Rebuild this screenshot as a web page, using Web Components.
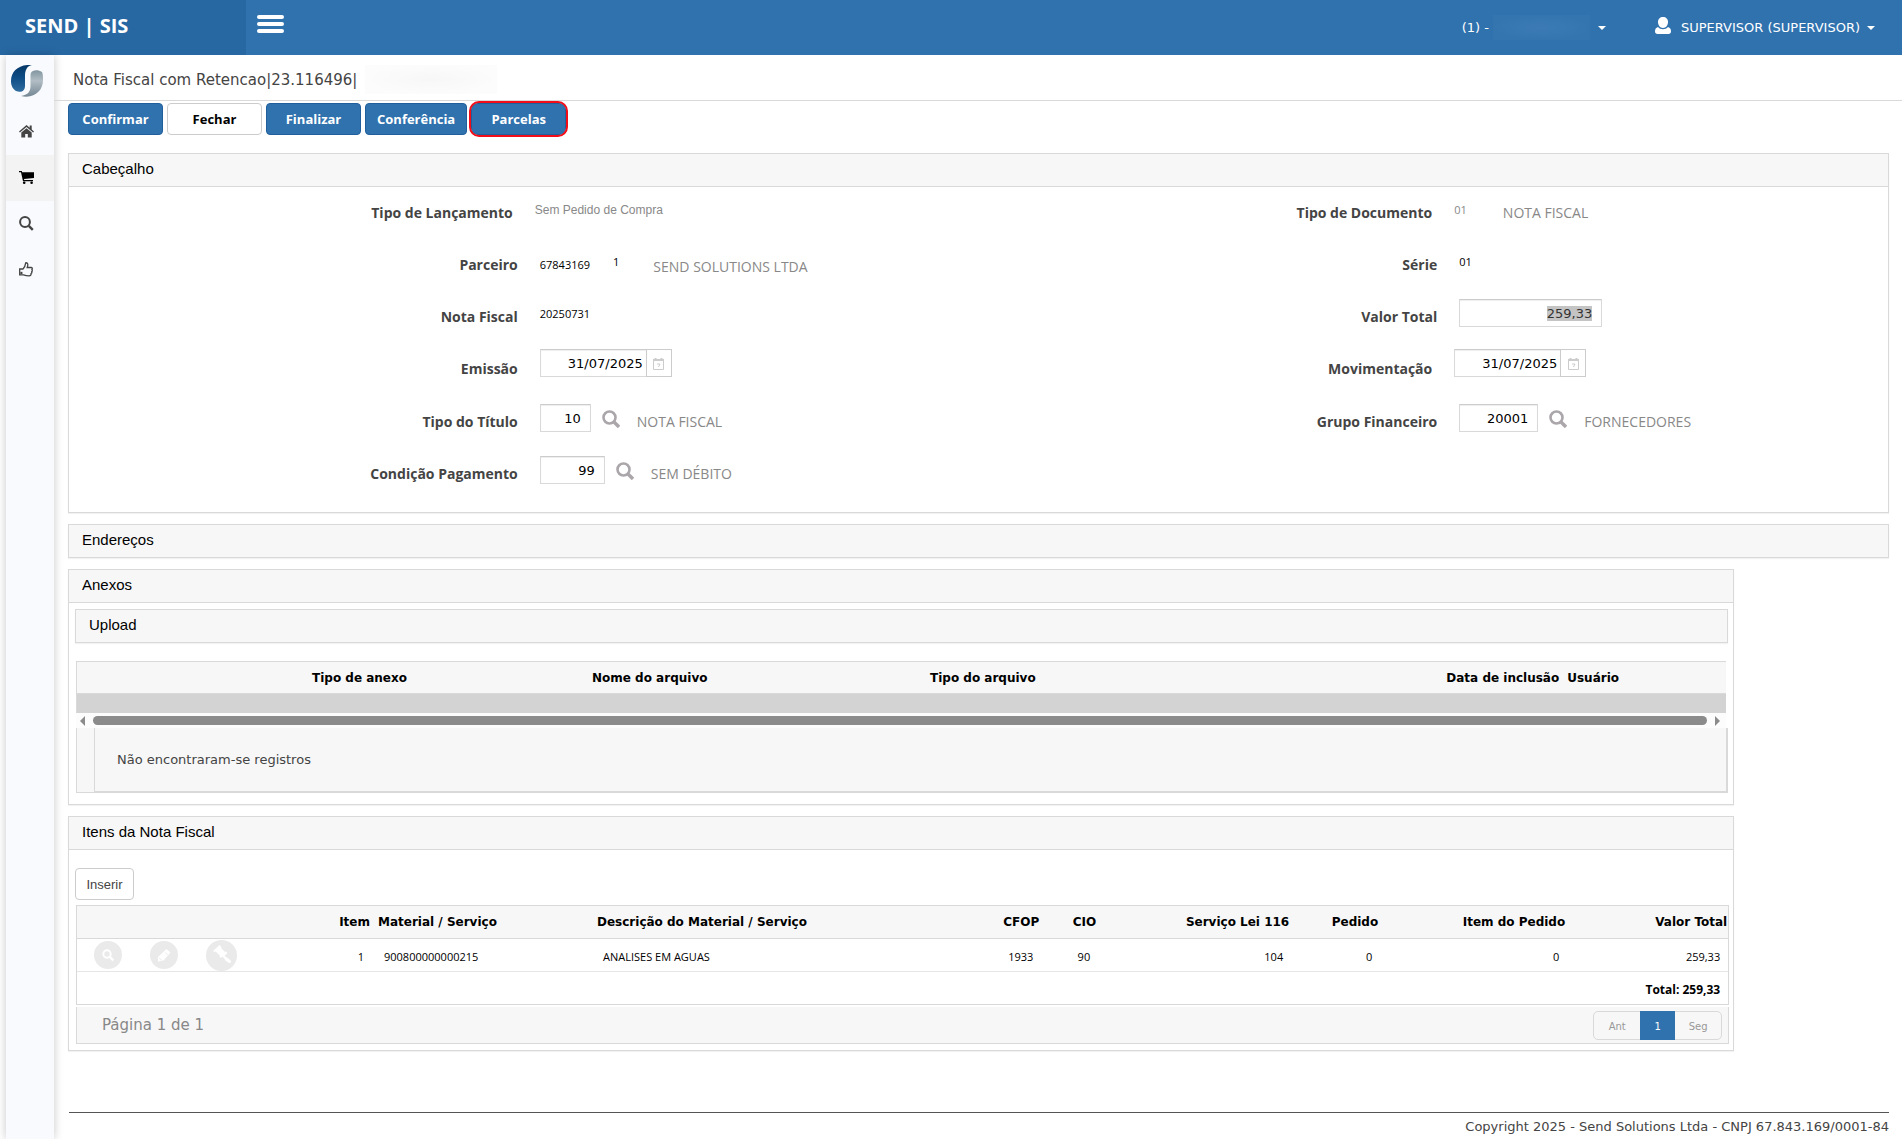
<!DOCTYPE html>
<html lang="pt-BR">
<head>
<meta charset="utf-8">
<title>SEND | SIS - Nota Fiscal</title>
<style>
  html, body { margin: 0; padding: 0; }
  body {
    --blue: #3072ae; --line: #d9d9d9; --soft: #f7f7f7;
    --wide: "DejaVu Sans", sans-serif; --human: "Open Sans", sans-serif; --plain: "Liberation Sans", sans-serif;
    background: #fff; font-family: "DejaVu Sans", sans-serif; font-size: 13px; color: #444;
  }
</style>
</head>
<body>
<sis-app>
  <sis-topbar slot="top" brand="SEND | SIS" company="(1) -" user="SUPERVISOR (SUPERVISOR)"></sis-topbar>
  <sis-sidebar slot="side"></sis-sidebar>
  <sis-title slot="title">Nota Fiscal com Retencao|23.116496|</sis-title>
  <sis-toolbar>
    <sis-button>Confirmar</sis-button>
    <sis-button kind="light">Fechar</sis-button>
    <sis-button>Finalizar</sis-button>
    <sis-button>Conferência</sis-button>
    <sis-button marked>Parcelas</sis-button>
  </sis-toolbar>
  <sis-panel heading="Cabeçalho">
    <sis-form>
      <sis-field tight label="Tipo de Lançamento" kind="choice" value="Sem Pedido de Compra"></sis-field>
      <sis-field tight label="Tipo de Documento" kind="mutedcode" value="01" desc="NOTA FISCAL"></sis-field>
      <sis-field label="Parceiro" kind="partner" value="67843169" branch="1" desc="SEND SOLUTIONS LTDA"></sis-field>
      <sis-field label="Série" kind="raised" value="01"></sis-field>
      <sis-field label="Nota Fiscal" kind="raised" value="20250731"></sis-field>
      <sis-field label="Valor Total" kind="text" value="259,33" width="143" selected></sis-field>
      <sis-field label="Emissão" kind="date" value="31/07/2025" width="107"></sis-field>
      <sis-field tight label="Movimentação" kind="date" value="31/07/2025" width="107"></sis-field>
      <sis-field label="Tipo do Título" kind="lookup" value="10" width="51" desc="NOTA FISCAL"></sis-field>
      <sis-field label="Grupo Financeiro" kind="lookup" value="20001" width="79" desc="FORNECEDORES"></sis-field>
      <sis-field label="Condição Pagamento" kind="lookup" value="99" width="65" desc="SEM DÉBITO"></sis-field>
    </sis-form>
  </sis-panel>
  <sis-panel heading="Endereços" closed></sis-panel>
  <sis-panel heading="Anexos" narrow>
    <sis-attachments>
      <sis-panel heading="Upload" closed></sis-panel>
    </sis-attachments>
  </sis-panel>
  <sis-panel heading="Itens da Nota Fiscal" narrow>
    <sis-items></sis-items>
  </sis-panel>
  <sis-footer slot="foot">Copyright 2025 - Send Solutions Ltda - CNPJ 67.843.169/0001-84</sis-footer>
</sis-app>

<script>
class SisElement extends HTMLElement {
  connectedCallback() {
    if (this.shadowRoot) return;
    this.attachShadow({ mode: "open" }).innerHTML = "<style>:host,*{box-sizing:border-box}" + this.css() + "</style>" + this.html();
    this.ready();
  }
  attr(name) { return this.getAttribute(name) || ""; }
  ready() {}
}

customElements.define("sis-app", class extends SisElement {
  css() { return `
    :host{display:flex;flex-direction:column;min-height:100vh}
    .below{display:flex;flex:1}
    .page{flex:1;min-width:0;display:flex;flex-direction:column}
    main{display:flex;flex-direction:column;gap:11px;padding:2px 13px 20px 14px}
    ::slotted(sis-footer){margin-top:auto}`; }
  html() { return `<slot name="top"></slot><div class="below"><slot name="side"></slot><div class="page"><slot name="title"></slot><main><slot></slot></main><slot name="foot"></slot></div></div>`; }
});

customElements.define("sis-topbar", class extends SisElement {
  css() { return `
    :host{display:flex;height:55px;background:var(--blue);color:#fff;font:13px var(--wide)}
    .brand{width:246px;padding:0 25px;background:#2768a3;font:bold 20px/52px var(--human)}
    .menu{display:flex;flex-direction:column;gap:3px;width:27px;height:18px;margin:15px 0 0 11px;padding:0;border:0;background:none}
    .menu i{height:4px;width:27px;border-radius:2px;background:#fff}
    nav{margin-left:auto;display:flex;align-items:center;padding-right:27px}
    a{display:flex;align-items:center;color:#fff;text-decoration:none;white-space:pre}
    .blank{width:97px;height:25px;margin:0 8px 0 4px;background:radial-gradient(closest-side,#3b7ab5,#3475b0)}
    .caret{border:4px solid transparent;border-top-color:#fff;border-bottom:0;margin-left:7px}
    .blank + .caret{margin-left:0}
    .user{margin-left:49px}
    .user svg{margin:0 10px 4px 0}`; }
  html() { return `<div class="brand">${this.attr("brand")}</div>
    <button class="menu" aria-label="Menu"><i></i><i></i><i></i></button>
    <nav><a href="#">${this.attr("company")}<span class="blank"></span><span class="caret"></span></a>
    <a href="#" class="user"><svg width="16" height="17" viewBox="0 0 16 17" fill="#fff"><path d="M8 0C5 0 3 2 3 5c0 3 2 6 5 6s5-3 5-6c0-3-2-5-5-5z"/><path d="M3 10c-2 .7-3 2-3 4.500C0 16 1 17 2.500 17h11c1.500 0 2.500-1 2.500-2.500C16 12 15 10.700 13 10c-1.300 1.500-3 2.200-5 2.200S4.300 11.500 3 10z"/></svg>${this.attr("user")}<span class="caret"></span></a></nav>`; }
});

customElements.define("sis-sidebar", class extends SisElement {
  css() { return `
    :host{display:block;width:48px;margin-left:6px;background:#f9fafd;box-shadow:0 0 9px rgba(0,0,0,.22)}
    .logo{display:block;height:54px;padding:10px 0 0 5px}
    nav a{display:flex;height:46px;padding:0 8px 2px 0;align-items:center;justify-content:center;color:#444}
    nav a.on{background:#f3f3f3;color:#000}`; }
  html() { return `<a class="logo" href="#" aria-label="Send"><svg width="32" height="32" viewBox="0 0 32 32">
      <defs><linearGradient id="b" x2="0" y2="1"><stop stop-color="#063766"/><stop offset=".45" stop-color="#0c4b84"/><stop offset="1" stop-color="#2f6c9f"/></linearGradient>
      <linearGradient id="g" x2="0" y2="1"><stop stop-color="#8296a0"/><stop offset=".4" stop-color="#b2bdc4"/><stop offset="1" stop-color="#748793"/></linearGradient></defs>
      <path fill="url(#b)" d="M21 0C8-1 0 6 0 16c0 5 2 8 5 10 5 2 9 0 9-5V11c0-6 2-10 7-11z"/>
      <path fill="url(#g)" d="M31 7c-3-2-7-2-9-1-2 .800-2.500 2-2.500 5v10c0 6-3 9-9.500 10 13 3 22-5 22-16 0-3 0-6-1-8z"/></svg></a>
    <nav><a href="#" aria-label="Início"><svg width="15" height="13" viewBox="0 0 15 13" fill="currentColor"><path d="M7.500 0 0 6.500l.9 1L7.500 2l6.600 5.500.9-1-2.300-2V.5h-2v2.200z"/><path d="M7.500 3.200 2.300 7.600V12.500h3.900V9h2.600v3.500h3.900V7.600z"/></svg></a>
    <a href="#" class="on" aria-label="Compras"><svg width="15" height="13" viewBox="0 0 15 13" fill="currentColor"><path d="M0 0h2.800l.4 1.200H15V7L5 8.100l.2 1H14v1.200H4L2 1.200H0z"/><circle cx="5.200" cy="11.700" r="1.300"/><circle cx="12.600" cy="11.700" r="1.300"/></svg></a>
    <a href="#" aria-label="Pesquisar"><svg width="15" height="15" viewBox="0 0 15 15" fill="none" stroke="currentColor" stroke-width="2"><circle cx="6" cy="6" r="4.900"/><path d="m9.800 9.800 4 4" stroke-width="2.400"/></svg></a>
    <a href="#" aria-label="Aprovar"><svg width="14" height="15" viewBox="0 0 14 15" fill="none" stroke="currentColor" stroke-width="1.300"><path d="M.7 7H4c2-2 2.300-3 2.700-6.200 2.200-.3 2.600 1.500 1.500 4.700H12c1.600 0 1.500 1.700.9 2.200.6.700.4 1.600-.2 2 .3.800 0 1.500-.6 1.800.1 1.500-.6 2.300-2 2.300-2.500 0-3.600-.2-5.600-1H.7z"/><path d="M2 10.500h.8v1H2z"/></svg></a></nav>`; }
});

customElements.define("sis-title", class extends SisElement {
  css() { return `
    :host{display:block;border-bottom:1px solid var(--line)}
    h1{display:flex;align-items:center;height:45px;margin:0;padding:4px 0 0 19px;font:15px var(--wide);color:#444}
    span{width:132px;height:29px;margin-left:8px;background:radial-gradient(closest-side,#f7f7f7,#fcfcfc)}`; }
  html() { return `<h1><slot></slot><span></span></h1>`; }
});

customElements.define("sis-toolbar", class extends SisElement {
  css() { return `:host{display:flex;gap:4px;margin-bottom:7px}`; }
  html() { return `<slot></slot>`; }
});

customElements.define("sis-button", class extends SisElement {
  css() { return `
    :host{display:block}
    button{display:block;min-width:95px;height:32px;padding:0 11px;border:1px solid #205f9b;border-radius:4px;background:var(--blue);color:#fff;font:bold 13px var(--human)}
    :host([kind=light]) button{background:#fff;color:#000;border-color:#ccc}
    :host([marked]){outline:2px solid #f20d18;border-radius:8px}
    :host([marked]) button{border-radius:7px}`; }
  html() { return `<button type="button"><slot></slot></button>`; }
});

customElements.define("sis-panel", class extends SisElement {
  css() { return `
    :host{display:block;border:1px solid var(--line);background:#fff;box-shadow:0 1px 1px rgba(0,0,0,.05)}
    :host([narrow]){width:91.5%}
    h2{margin:0;height:32px;padding-left:13px;background:var(--soft);color:#000;font:15px/30px var(--plain)}
    .body{border-top:1px solid var(--line)}
    :host([closed]) .body{display:none}`; }
  html() { return `<h2>${this.attr("heading")}</h2><div class="body"><slot></slot></div>`; }
});

customElements.define("sis-form", class extends SisElement {
  css() { return `:host{display:grid;grid-template-columns:1fr 1fr;column-gap:20px;grid-template-rows:51px 54px 50px 54px 52px 52px;padding-bottom:12px}`; }
  html() { return `<slot></slot>`; }
});

const LENS = `<svg width="18" height="18" viewBox="0 0 18 18" fill="none" stroke="#aaa6aa" stroke-width="2.600"><circle cx="7.500" cy="7.500" r="6"/><path d="m12 12 5 5" stroke-width="3.400"/></svg>`;

customElements.define("sis-field", class extends SisElement {
  css() { return `
    :host{display:flex;align-items:center}
    label{width:calc(50% - 1px);text-align:right;font:bold 14px/20px var(--human);color:#444}
    :host([tight]) label{width:calc(50% - 6px)}
    .value{display:flex;align-items:center;margin-left:22px}
    input{height:28px;border:1px solid var(--line);border-top-color:#ccc;background:#fff;color:#000;padding:0 9px 0 2px;text-align:right;font:13px var(--wide);outline:0;box-shadow:inset 0 1px 1px rgba(0,0,0,.07)}
    input::selection{background:#c4c4c4;color:#333}
    .date input{padding-right:3px}
    .boxed{margin-bottom:8px}
    .date{display:flex;margin-bottom:6px}
    .date button{width:26px;height:28px;margin:0 0 0 -1px;padding:5px 0 0;border:1px solid #ccc;background:#fff}
    .lens{margin:0 0 6px 11px;padding:0;border:0;background:none;width:18px;height:18px;line-height:0}
    .desc{font:14px/20px var(--human);color:#888}
    .lookup .desc{margin-left:17px}
    .num{font:11px/16px var(--human);color:#000}
    .up{margin-bottom:6px}
    .muted{color:#888}
    .mutedcode .up{margin-right:36px}
    .choice output{font:12px/16px var(--plain);color:#888}
    .partner .up{margin:0 34px 6px 23px;width:1ch}
    .partner .desc{padding-top:4px}`; }
  html() {
    const kind = this.attr("kind"), v = this.attr("value"), d = this.attr("desc"), w = this.attr("width");
    const input = `<input id="f" class="boxed" value="${v}" style="width:${w}px">`;
    const desc = `<span class="desc">${d}</span>`;
    const body = {
      choice: `<output id="f" class="up">${v}</output>`,
      mutedcode: `<output id="f" class="num muted up">${v}</output>${desc}`,
      partner: `<output id="f" class="num">${v}</output><span class="num up">${this.attr("branch")}</span>${desc}`,
      raised: `<output id="f" class="num up">${v}</output>`,
      text: input,
      date: `<span class="date"><input id="f" value="${v}" style="width:${w}px"><button type="button" aria-label="Calendário"><svg width="11" height="12" viewBox="0 0 11 12" fill="none" stroke="#ccc"><path d="M.5 2.500h10v9H.5z"/><path d="M0 2h11M2.500 0v3M8.500 0v3" stroke-width="2"/><path d="M4 6h3L5.500 9"/></svg></button></span>`,
      lookup: `${input}<button type="button" class="lens" aria-label="Pesquisar">${LENS}</button>${desc}`
    }[kind];
    return `<label for="f">${this.attr("label")}</label><div class="value ${kind}">${body}</div>`;
  }
  ready() {
    if (!this.hasAttribute("selected")) return;
    const box = this.shadowRoot.getElementById("f");
    box.focus({ preventScroll: true });
    box.select();
  }
});

customElements.define("sis-attachments", class extends SisElement {
  css() { return `
    :host{display:block;padding:6px 5px 11px 6px}
    table{width:calc(100% - 3px);margin:18px 0 0 1px;table-layout:fixed;border-collapse:separate;border-spacing:0;border:1px solid var(--line);border-right:0;border-bottom:0;background:var(--soft)}
    th{height:32px;padding:0 4px;text-align:left;white-space:nowrap;font:bold 12px var(--wide);color:#000;border-bottom:1px solid var(--line)}
    th.r{text-align:right}
    td{height:19px;padding:0;background:#d3d3d3}
    .bar{display:flex;align-items:center;gap:8px;height:15px;padding:0 6px 0 4px;margin:0 2px 0 1px;background:#fcfcfc}
    .bar b{flex:1;height:9px;border-radius:5px;background:#8b8b8b}
    .left,.right{border:5px solid transparent}
    .left{border-right-color:#8b8b8b;border-left:0}
    .right{border-left-color:#8b8b8b;border-right:0}
    .empty{margin-left:1px;padding-left:17px;border:1px solid var(--line);border-top:0;background:var(--soft)}
    .empty p{margin:0;height:64px;padding-left:22px;font:13px/64px var(--wide);color:#444;border:1px solid var(--line);border-top:0}`; }
  html() { return `<slot></slot>
    <table><colgroup><col style="width:231px"><col style="width:280px"><col style="width:338px"><col style="width:260px"><col><col style="width:163px"></colgroup>
      <thead><tr><th></th><th>Tipo de anexo</th><th>Nome do arquivo</th><th>Tipo do arquivo</th><th class="r">Data de inclusão</th><th>Usuário</th></tr></thead>
      <tbody><tr><td colspan="6"></td></tr></tbody></table>
    <div class="bar"><span class="left"></span><b></b><span class="right"></span></div>
    <div class="empty"><p>Não encontraram-se registros</p></div>`; }
});

customElements.define("sis-items", class extends SisElement {
  css() { return `
    :host{display:block;padding:18px 4px 6px 6px}
    .add{display:block;width:59px;height:32px;border:1px solid #ccc;border-radius:4px;background:#fff;color:#444;font:13px var(--plain);padding:0}
    table{width:calc(100% - 1px);margin:5px 0 0 1px;table-layout:fixed;border-collapse:separate;border-spacing:0;border:1px solid var(--line)}
    th{height:33px;padding:0 4px;text-align:right;white-space:nowrap;background:var(--soft);border-bottom:1px solid var(--line);font:bold 12px var(--wide);color:#000}
    th:last-child{padding-right:1px}
    td{height:33px;padding:3px 10px 0;text-align:right;border-bottom:1px solid #e6e6e6;font:11px var(--human);color:#000}
    td:last-child{padding-right:8px}
    .t{text-align:left}
    tfoot td{height:32px;border:0;font:bold 12px var(--human)}
    td.acts{padding:0 0 0 17px}
    .acts div{display:flex;align-items:center;gap:28px}
    .acts button{padding:0;border:0;background:none;line-height:0}
    .pager{display:flex;align-items:center;justify-content:space-between;height:37px;margin:2px 0 0 1px;padding:0 6px 0 25px;background:var(--soft);border:1px solid var(--line);border-top:0;color:#888;font:15px var(--wide)}
    nav{display:flex;height:29px;border:1px solid var(--line);border-radius:5px}
    nav a{display:flex;align-items:center;justify-content:center;width:46px;padding-top:2px;color:#999;font:10px var(--wide);text-decoration:none}
    nav a.on{width:35px;margin:-1px 0;background:var(--blue);color:#fff}`; }
  html() { return `<button type="button" class="add">Inserir</button>
    <table><colgroup><col style="width:253px"><col style="width:44px"><col style="width:219px"><col><col style="width:45px"><col style="width:57px"><col style="width:193px"><col style="width:89px"><col style="width:187px"><col style="width:159px"></colgroup>
    <thead><tr><th></th><th>Item</th><th class="t">Material / Serviço</th><th class="t">Descrição do Material / Serviço</th><th>CFOP</th><th>CIO</th><th>Serviço Lei 116</th><th>Pedido</th><th>Item do Pedido</th><th>Valor Total</th></tr></thead>
    <tbody><tr><td class="acts"><div>
      <button type="button" aria-label="Ver"><svg width="28" height="28" viewBox="0 0 28 28"><circle cx="14" cy="14" r="14" fill="#eaeaea"/><circle cx="13" cy="13" r="3.700" fill="none" stroke="#fff" stroke-width="2"/><path d="m15.800 15.800 3.500 3.500" stroke="#fff" stroke-width="2.400"/></svg></button>
      <button type="button" aria-label="Editar"><svg width="28" height="28" viewBox="0 0 28 28"><circle cx="14" cy="14" r="14" fill="#eaeaea"/><path fill="#fff" d="m16.500 8 4 3.500-7 8-5.500 1v-4.500z"/><path d="m15 11.500 3 2.500M9 17l3 2.500" stroke="#eaeaea" stroke-width=".8"/></svg></button>
      <button type="button" aria-label="Retenções"><svg width="31" height="31" viewBox="0 0 31 31"><circle cx="15.500" cy="15.500" r="15.500" fill="#eaeaea"/><path fill="#fff" d="m13.500 5 2 2-.5 1 4 4 1-.5 1.500 1.500-3 3 4 2.500 2.500 2.500c.5 1-1 2.500-2 2l-3-2-3.500-4.500-1.500 1.500-1.500-1.500.3-1-4-4-1 .5L7 11z"/></svg></button></div></td>
      <td>1</td><td class="t">900800000000215</td><td class="t">ANALISES EM AGUAS</td><td>1933</td><td>90</td><td>104</td><td>0</td><td>0</td><td>259,33</td></tr></tbody>
    <tfoot><tr><td colspan="10">Total: 259,33</td></tr></tfoot></table>
    <div class="pager"><span>Página 1 de 1</span><nav><a href="#">Ant</a><a href="#" class="on">1</a><a href="#">Seg</a></nav></div>`; }
});

customElements.define("sis-footer", class extends SisElement {
  css() { return `:host{display:block;margin:0 13px 0 15px;height:27px;border-top:1px solid #555;text-align:right;font:13px/28px var(--wide);color:#444}`; }
  html() { return `<slot></slot>`; }
});
</script>
</body>
</html>
